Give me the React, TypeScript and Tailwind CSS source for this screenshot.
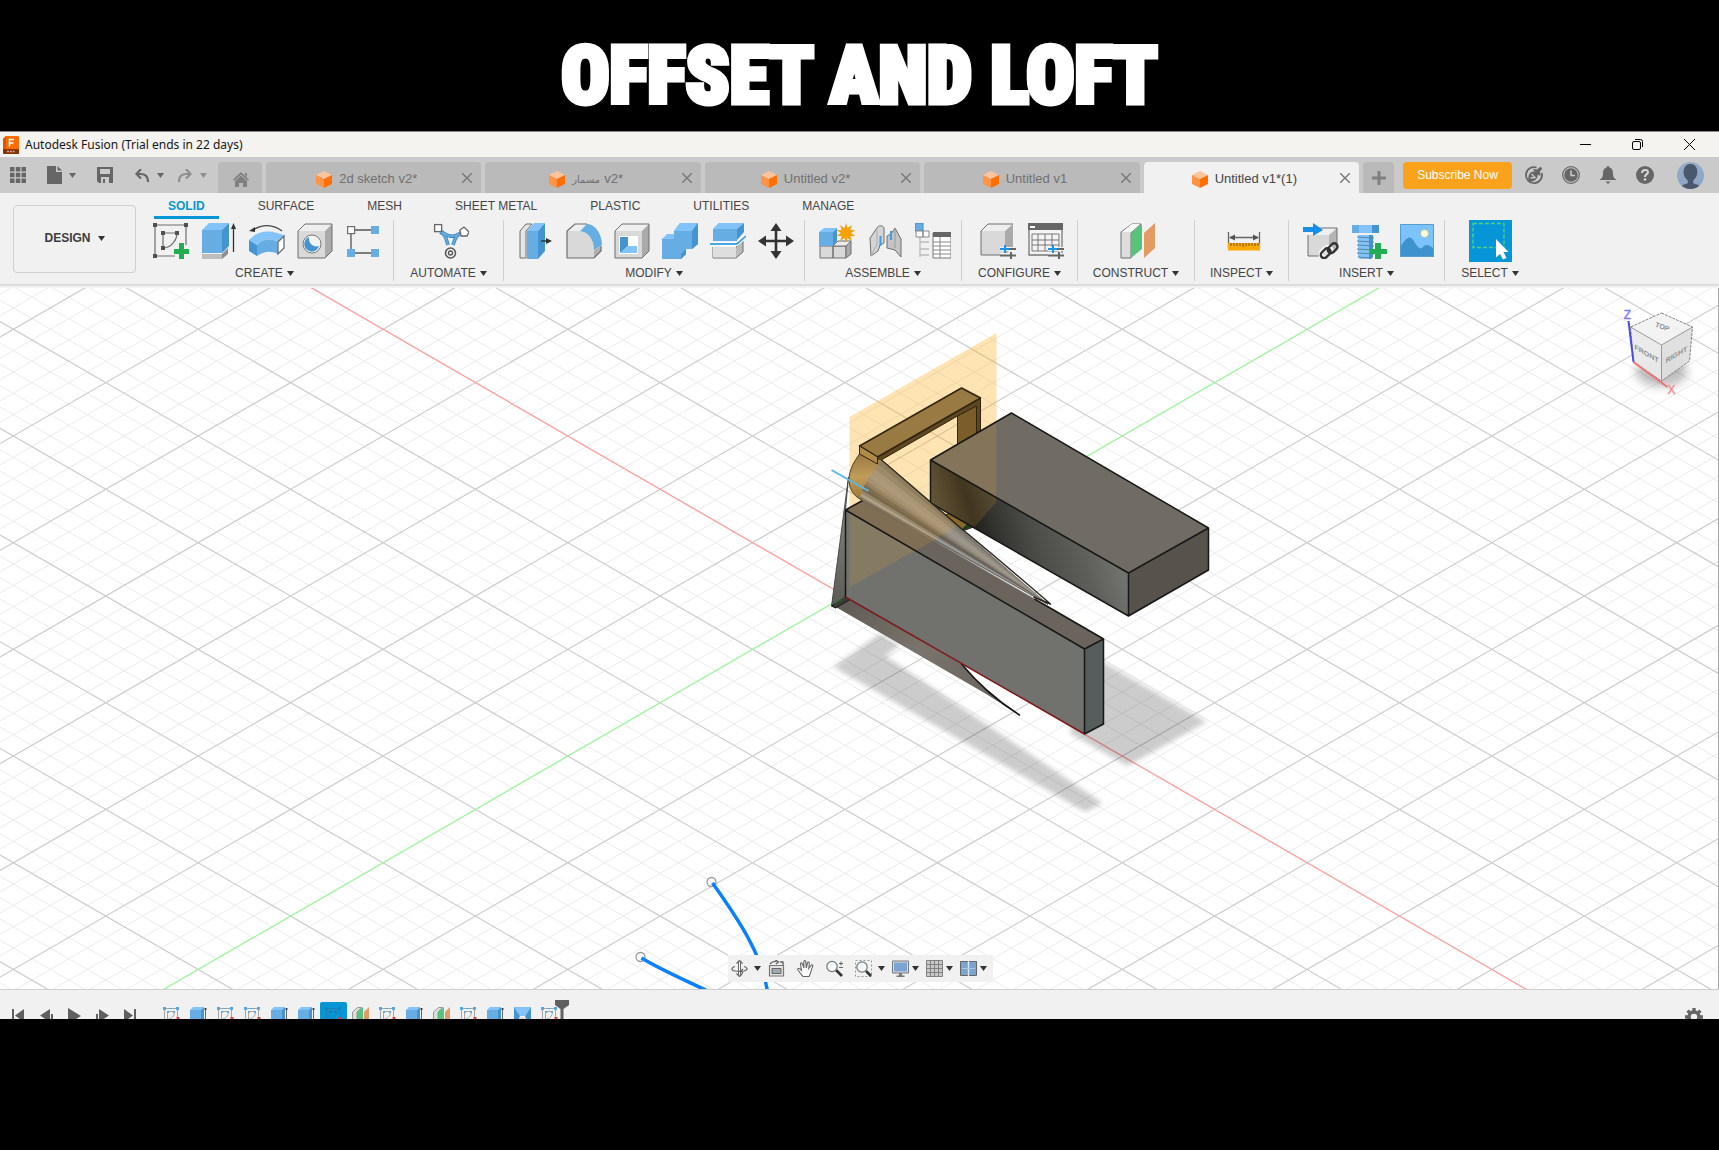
import React from "react";

type IconProps = { children: React.ReactNode; size?: string; box?: string };

function Svg({ children, size = "size-9", box = "0 0 36 36" }: IconProps) {
  return (
    <svg viewBox={box} className={`${size} shrink-0`} fill="none" aria-hidden="true">
      {children}
    </svg>
  );
}

function Caret({ className = "text-[#333]" }: { className?: string }) {
  return (
    <svg viewBox="0 0 7 5" className={`h-[5px] w-[7px] shrink-0 ${className}`} aria-hidden="true">
      <path d="M0 0h7L3.5 5z" fill="currentColor" />
    </svg>
  );
}

const LIGHT = "#82c4fa";
const MID = "#65ade3";
const DARK = "#4394d0";
const GREY = "#d9d9d9";
const EDGE = "#6e6e6e";

const SketchIcon = () => (
  <Svg>
    <g stroke={EDGE} strokeWidth="1.2">
      <path d="M2 2h31v20M2 2v31h20" />
      <path d="M10 10h14c0 7-6 15-14 15z" />
    </g>
    <g fill="#505050">
      <path d="M0 0h4v4H0zM31 0h4v4h-4zM0 31h4v4H0zM8 8h4v4H8zM22 8h4v4h-4zM8 23h4v4H8z" />
    </g>
    <path d="M26 20h5v6h6v5h-6v6h-5v-6h-5v-5h5z" fill="#22ae50" />
  </Svg>
);

const ExtrudeIcon = () => (
  <Svg>
    <path d="M1 31h20v5H1z" fill="#bdbdbd" />
    <path d="M21 31l6-6v6l-6 5z" fill="#8e8e8e" />
    <path d="M1 7h20v23H1z" fill={MID} />
    <path d="M1 7l7-7h20l-7 7z" fill={LIGHT} />
    <path d="M21 7l7-7v23l-7 7z" fill={DARK} />
    <path d="M32.500 29V4" stroke="#333" strokeWidth="1.300" />
    <path d="M32.500 0l2.500 6h-5z" fill="#333" />
  </Svg>
);

const RevolveIcon = () => (
  <Svg>
    <path d="M4 7C13 1 24 1 33 8" stroke="#444" strokeWidth="1.300" />
    <path d="M0 8l6-4v5z" fill="#333" />
    <path d="M0 17C9 7 22 6 36 13l-7 6c-8-4-15-3-21 3z" fill={LIGHT} />
    <path d="M8 22c6-6 13-7 21-3v12c-8-4-15-2-21 2z" fill={MID} />
    <path d="M0 17l8 5v11l-8-5z" fill={DARK} />
    <path d="M29 19l6-6v12l-6 6z" fill="#fff" stroke={EDGE} strokeWidth="1.300" />
  </Svg>
);

const GreyBox = () => (
  <>
    <path d="M1 8h27v27H1z" fill={GREY} />
    <path d="M1 8l7-7h27l-7 7z" fill="#efefef" />
    <path d="M28 8l7-7v27l-7 7z" fill="#aaa" />
    <path d="M1 8l7-7h27v27l-7 7H1z" stroke={EDGE} strokeWidth="1" />
  </>
);

const HoleIcon = () => (
  <Svg>
    <GreyBox />
    <circle cx="15" cy="21" r="9" fill="#f4f4f4" stroke="#777" />
    <path d="M12 14a7.500 7.500 0 1 0 10 9c-6 2-11-3-10-9z" fill={DARK} />
  </Svg>
);

const PatternIcon = () => (
  <Svg>
    <path d="M8 7h18M6 9v18M8 30h18" stroke="#555" strokeWidth="1.300" />
    <rect x="2.600" y="3.600" width="7" height="7" fill="#fff" stroke={EDGE} strokeWidth="1.200" />
    <path d="M26 3h8v8h-8zM2 26h8v8H2zM26 26h8v8h-8z" fill={MID} />
  </Svg>
);

const AutomateIcon = () => (
  <Svg>
    <path d="M7 9c6 2 6 7 8 13m14-13c-6 3-7 7-9 13M8 8c7 6 12 7 20 2" stroke="#3f86bd" strokeWidth="3.600" />
    <path d="M7 9c6 2 6 7 8 13m14-13c-6 3-7 7-9 13M8 8c7 6 12 7 20 2" stroke={MID} strokeWidth="1.800" />
    <rect x="1.600" y="1.600" width="7" height="7" fill="#fff" stroke="#666" strokeWidth="1.300" />
    <path d="M27 7l4-3 5 5-2 4-6 0z" fill="#fff" stroke="#666" strokeWidth="1.300" />
    <circle cx="17.500" cy="30" r="5" fill="#eee" stroke="#555" strokeWidth="1.500" />
    <circle cx="17.500" cy="30" r="2" stroke="#555" strokeWidth="1.300" />
  </Svg>
);

const PressPullIcon = () => (
  <Svg>
    <path d="M2 8l6-7h6l-6 7v27H2z" fill="#e5e5e5" stroke={EDGE} />
    <path d="M9 8h11v28H9z" fill={MID} />
    <path d="M9 8l7-8h11l-7 8z" fill={LIGHT} />
    <path d="M20 8l7-8v28l-7 8z" fill={DARK} />
    <path d="M23 18h8" stroke="#333" strokeWidth="1.500" />
    <path d="M34 18l-6-3v6z" fill="#333" />
  </Svg>
);

const FilletIcon = () => (
  <Svg>
    <path d="M1 8h13c8 1 14 8 14 19v8H1z" fill={GREY} />
    <path d="M1 8l8-7h12l-7 7z" fill="#efefef" />
    <path d="M28 27l7-4v5l-7 7z" fill="#b0b0b0" />
    <path d="M1 8l8-7h12M35 23v5l-7 7H1V8" stroke={EDGE} strokeWidth="1.200" />
    <path d="M14 8l7-7c8 0 15 10 15 21l-8 5C28 16 22 9 14 8z" fill={MID} />
  </Svg>
);

const ShellIcon = () => (
  <Svg>
    <GreyBox />
    <path d="M5 13h19v18H5z" fill="#fff" />
    <path d="M6 14h8v9l-8 7z" fill={DARK} />
    <path d="M14 23h9v7H6z" fill={LIGHT} />
  </Svg>
);

const CombineIcon = () => (
  <Svg>
    <path d="M0 16h12V8l6-8h18v21l-6 5h-6v5l-5 5H0z" fill={MID} />
    <path d="M0 16l5-5h7v5zM12 8l6-8h18l-6 8z" fill={LIGHT} />
    <path d="M30 8l6-8v21l-6 5zM19 31v5l5-5v-5z" fill={DARK} />
  </Svg>
);

const SplitIcon = () => (
  <Svg>
    <path d="M3 24h23v10H3z" fill={GREY} />
    <path d="M26 24l7-6v11l-7 6H3V24" fill="#bbb" stroke={EDGE} />
    <path d="M3 24h23v10.500H3z" fill="#dedede" />
    <path d="M3 6l6-6h25l-7 6v12H3z" fill={MID} />
    <path d="M3 6l6-6h25l-7 6z" fill={LIGHT} />
    <path d="M27 6l7-6v9l-7 8z" fill={DARK} />
    <path d="M0 21h27l9-8" stroke="#fff" strokeWidth="4" />
    <path d="M0 21h27l9-8" stroke="#49a5e8" strokeWidth="1.800" />
  </Svg>
);

const MoveIcon = () => (
  <Svg>
    <path d="M18 5v26M5 18h26" stroke="#333" strokeWidth="2.600" />
    <path d="M18 0l5.500 8h-11zM18 36l5.500-8h-11zM0 18l8-5.500v11zM36 18l-8-5.500v11z" fill="#333" />
  </Svg>
);

const NewComponentIcon = () => (
  <Svg>
    <path d="M1 23h13v12H1zM14 23h13v12H14z" fill={GREY} stroke={EDGE} />
    <path d="M14 23l5-5h13l-5 5z" fill="#eee" stroke={EDGE} />
    <path d="M27 23l5-5v13l-5 4z" fill="#aaa" stroke={EDGE} />
    <path d="M0 9h14v14H0z" fill={MID} />
    <path d="M0 9l5-4h13l-4 4z" fill={LIGHT} />
    <path d="M14 9l4-4v13l-4 5z" fill={DARK} />
    <path d="M27 0l1.500 5 4.500-3-1.700 5 5.200 0-4.400 3 4.400 3-5.200 0 1.700 5-4.500-3-1.500 5-1.500-5-4.500 3 1.700-5-5.200 0 4.400-3-4.400-3 5.200 0-1.700-5 4.500 3z" fill="#f6a10a" />
  </Svg>
);

const JointIcon = () => (
  <Svg>
    <path d="M3 15l7-10c1-3 6-3 7 0v15l-4 2-2 6-7 5z" fill="#d5d5d5" stroke={EDGE} />
    <path d="M10 7v14l-6 12" stroke="#aaa" />
    <path d="M20 13l4-2 4-6 6 11v18l-6-7-8-2z" fill="#c5c5c5" stroke={EDGE} />
    <path d="M28 5v20" stroke="#999" />
    <path d="M13.500 13v10M24 8v9" stroke="#3a9ee8" strokeWidth="2" />
  </Svg>
);

const TableIcon = () => (
  <Svg>
    <path d="M5 14v20M5 19h9M5 26h9M5 32h9" stroke="#bbb" strokeWidth="1.300" />
    <path d="M0 0h8v8H0z" fill={MID} stroke="#4a86b5" />
    <path d="M1 8h7v6H1zM8 8h6v6H8z" fill="#fff" stroke="#888" />
    <path d="M18 10h18v25H18z" fill="#fff" stroke="#777" />
    <path d="M18 9h18v5H18z" fill="#666" />
    <path d="M18 19h18M18 23h18M18 27h18M18 31h18M25 14v21" stroke="#888" />
  </Svg>
);

const Sliders = () => (
  <>
    <path d="M20 26h16M20 32h16" stroke="#f1f1f1" strokeWidth="4" />
    <path d="M20 26h16M20 32.500h16M31 29v7" stroke="#666" strokeWidth="2" />
    <path d="M20 26h9M25 22v8" stroke="#1c93ea" strokeWidth="2" />
  </>
);

const ConfigureIcon = () => (
  <Svg>
    <path d="M1 8h24v24H1z" fill={GREY} />
    <path d="M1 8l7-7h25l-8 7z" fill="#eee" />
    <path d="M25 8l8-7v23l-8 8z" fill="#aaa" />
    <path d="M1 32V8l7-7h25" stroke={EDGE} />
    <path d="M1 32h20" stroke={EDGE} />
    <Sliders />
  </Svg>
);

const ConfigTableIcon = () => (
  <Svg>
    <path d="M1 1h33v31H1z" fill="#f4f4f4" stroke="#777" strokeWidth="1.300" />
    <path d="M0 0h35v7H0z" fill="#666" />
    <path d="M2 3h5v2H2z" fill="#fff" />
    <path d="M4 11h27v17H4zM4 17h27M4 22h27M10 11v17M17 11v17M24 11v17" stroke="#777" />
    <Sliders />
  </Svg>
);

const ConstructIcon = () => (
  <Svg>
    <path d="M1 9l11-8h9l-10 9v25H1z" fill="#ddd" stroke={EDGE} />
    <path d="M2 9l10-8h8L11 9z" fill="#fafafa" />
    <path d="M11 10l11-9v25l-11 9z" fill="#57c27c" />
    <path d="M24 10l11-10v25L24 35z" fill="#e49a63" />
  </Svg>
);

const InspectIcon = () => (
  <Svg>
    <path d="M2.500 9v16M33.500 9v16M4 14.500h28" stroke="#666" strokeWidth="1.300" />
    <path d="M3 14.500l6-3v6zM33 14.500l-6-3v6z" fill="#555" />
    <path d="M2 20h32v7.500H2z" fill="#fba905" />
    <path d="M5 20v3M8 20v3M11 20v3M14 20v3M17 20v4M20 20v3M23 20v3M26 20v3M29 20v3M32 20v3" stroke="#79520a" />
  </Svg>
);

const InsertLinkIcon = () => (
  <Svg>
    <path d="M5 12h21v21H5z" fill={GREY} />
    <path d="M5 12l7-7h22l-8 7z" fill="#f0f0f0" />
    <path d="M26 12l8-7v22l-8 6z" fill="#b5b5b5" />
    <path d="M12 5h22v21M5 12v21h13" stroke={EDGE} />
    <path d="M0 4h10V0l10 7-10 6v-4H0z" fill="#178fe6" />
    <g stroke="#f1f1f1" strokeWidth="5">
      <rect x="17" y="26" width="12" height="7" rx="3.500" transform="rotate(-45 23 29.500)" />
    </g>
    <g stroke="#333" strokeWidth="2.400">
      <rect x="17" y="27" width="11" height="6.500" rx="3.200" transform="rotate(-45 22.500 30)" />
      <rect x="24" y="22" width="11" height="6.500" rx="3.200" transform="rotate(-45 29.500 25)" />
    </g>
  </Svg>
);

const BoltIcon = () => (
  <Svg>
    <path d="M7 12h15v22l-2 2H9l-2-2z" fill={LIGHT} />
    <path d="M18 12h4v22l-2 2h-2z" fill={DARK} />
    <path d="M6 14l17 1M6 18l17 1M6 22l17 1M6 26l17 1M6 30l17 1M7 34l13 1" stroke="#5b86a8" />
    <path d="M1 2h27v8H1z" fill={MID} />
    <path d="M8 2h13v8H8z" fill={LIGHT} />
    <path d="M21 2h7v8h-7z" fill={DARK} />
    <path d="M24 20h6v6h6v5h-6v6h-6v-6h-5v-5h5z" fill="#22ae50" />
  </Svg>
);

const ImageIcon = () => (
  <Svg>
    <path d="M1 1h34v33H1z" fill="#7cc3fb" />
    <path d="M1 24c5-7 9-13 13-7 3 4 6 10 9 8 3-3 5-5 12 1v8H1z" fill="#3e93cf" />
    <path d="M1.500 1.500h33v32h-33z" stroke="#569dd2" />
    <circle cx="25.500" cy="10.500" r="4" fill="#fffbd3" stroke="#8fb4a0" strokeWidth=".6" />
  </Svg>
);

const SelectIcon = () => (
  <svg viewBox="0 0 42 42" className="h-[42px] w-[43px]" fill="none" aria-hidden="true">
    <rect x="3.500" y="3.500" width="31" height="24" stroke="#50cf86" strokeWidth="1.400" strokeDasharray="4 2" />
    <path d="M26.500 19V37.500L30.500 34l3 5.500 3.500-1.500-3-6h5z" fill="#fff" />
  </svg>
);

type Group = { label: string; width: string; tools: [string, React.ReactNode][] };

const groups: Group[] = [
  {
    label: "CREATE",
    width: "w-[258px]",
    tools: [
      ["Create Sketch", <SketchIcon />],
      ["Extrude", <ExtrudeIcon />],
      ["Revolve", <RevolveIcon />],
      ["Hole", <HoleIcon />],
      ["Pattern", <PatternIcon />],
    ],
  },
  { label: "AUTOMATE", width: "w-[110px]", tools: [["Automated Modeling", <AutomateIcon />]] },
  {
    label: "MODIFY",
    width: "w-[301px]",
    tools: [
      ["Press Pull", <PressPullIcon />],
      ["Fillet", <FilletIcon />],
      ["Shell", <ShellIcon />],
      ["Combine", <CombineIcon />],
      ["Split Body", <SplitIcon />],
      ["Move", <MoveIcon />],
    ],
  },
  {
    label: "ASSEMBLE",
    width: "w-[157px]",
    tools: [
      ["New Component", <NewComponentIcon />],
      ["Joint", <JointIcon />],
      ["Bill of Materials", <TableIcon />],
    ],
  },
  {
    label: "CONFIGURE",
    width: "w-[116px]",
    tools: [
      ["Configure", <ConfigureIcon />],
      ["Configuration Table", <ConfigTableIcon />],
    ],
  },
  { label: "CONSTRUCT", width: "w-[117px]", tools: [["Offset Plane", <ConstructIcon />]] },
  { label: "INSPECT", width: "w-[94px]", tools: [["Measure", <InspectIcon />]] },
  {
    label: "INSERT",
    width: "w-[156px]",
    tools: [
      ["Insert Derive", <InsertLinkIcon />],
      ["Insert Fastener", <BoltIcon />],
      ["Canvas", <ImageIcon />],
    ],
  },
];

function TitleBar() {
  return (
    <div className="flex h-[26px] items-center border-t border-[#8a8684] bg-[#f4f3f0] pl-[3px] font-['Noto_Sans','Open_Sans',sans-serif]">
      <svg viewBox="0 0 16 18" className="h-[18px] w-4" aria-hidden="true">
        <path d="M3 0h12a1 1 0 0 1 1 1v16a1 1 0 0 1-1 1H1a1 1 0 0 1-1-1V3z" fill="#ff6b00" />
        <path d="M0 13h16v4a1 1 0 0 1-1 1H1a1 1 0 0 1-1-1z" fill="#8a3300" />
        <path d="M0 3l3-3v13H0z" fill="#d95b00" />
        <path d="M6.500 10.500V3.500h4.500M6.500 7h4" stroke="#fff" strokeWidth="1.600" fill="none" />
        <path d="M4 15.500h8" stroke="#d9a98c" strokeWidth="1.500" strokeDasharray="2 .8" />
      </svg>
      <span className="ml-[6px] flex-1 text-[12px] leading-4 text-[#161616]">Autodesk Fusion (Trial ends in 22 days)</span>
      <div className="flex items-center gap-[30px] pr-[19px] text-black">
        <button aria-label="Minimize" className="grid size-[22px] place-items-center">
          <svg viewBox="0 0 11 11" className="size-[11px]" aria-hidden="true"><path d="M0 5.500h11" stroke="currentColor" /></svg>
        </button>
        <button aria-label="Restore" className="grid size-[22px] place-items-center">
          <svg viewBox="0 0 11 11" className="size-[11px]" fill="none" stroke="currentColor" aria-hidden="true">
            <rect x=".5" y="2.500" width="8" height="8" rx="1.500" />
            <path d="M3 .5h5.500a2 2 0 0 1 2 2V8" />
          </svg>
        </button>
        <button aria-label="Close" className="grid size-[22px] place-items-center">
          <svg viewBox="0 0 11 11" className="size-[11px]" stroke="currentColor" aria-hidden="true"><path d="M0 0l11 11M11 0L0 11" /></svg>
        </button>
      </div>
    </div>
  );
}

function DocCube() {
  return (
    <svg viewBox="0 0 16 17" className="h-[17px] w-4 shrink-0" aria-hidden="true">
      <path d="M8 0l8 4-8 4-8-4z" fill="#ffc49b" />
      <path d="M0 4l8 4v9l-8-4z" fill="#ff9446" />
      <path d="M16 4L8 8v9l8-4z" fill="#ff6f06" />
    </svg>
  );
}

const docs: { arabic?: string; name: string }[] = [
  { name: "2d sketch v2*" },
  { arabic: "مسمار", name: "v2*" },
  { name: "Untitled v2*" },
  { name: "Untitled v1" },
  { name: "Untitled v1*(1)" },
];

function TabBar() {
  return (
    <div className="flex h-9 items-end bg-[#cacaca] text-[#666]">
      <div className="flex w-[218px] shrink-0 items-center self-stretch pl-[10px]">
        <button aria-label="Show Data Panel" className="mr-[21px]">
          <svg viewBox="0 0 16 16" className="size-4" fill="currentColor" aria-hidden="true">
            <path d="M0 0h4.500v4.500H0zM5.800 0h4.500v4.500H5.800zM11.500 0H16v4.500h-4.500zM0 5.800h4.500v4.500H0zM5.800 5.800h4.500v4.500H5.800zM11.500 5.800H16v4.500h-4.500zM0 11.500h4.500V16H0zM5.800 11.500h4.500V16H5.800zM11.500 11.500H16V16h-4.500z" />
          </svg>
        </button>
        <button aria-label="File" className="mr-[21px] flex items-center gap-[7px]">
          <svg viewBox="0 0 15 18" className="h-[18px] w-[15px]" fill="currentColor" aria-hidden="true">
            <path d="M0 0h9v6h6v12H0zM10.500 0L15 4.500h-4.500z" />
          </svg>
          <Caret className="text-[#666]" />
        </button>
        <button aria-label="Save" className="mr-[22px]">
          <svg viewBox="0 0 16 16" className="size-4" fill="currentColor" fillRule="evenodd" aria-hidden="true">
            <path d="M0 0h16v16H2l-2-2zM3 2v5h10V2zM4 10v6h2v-4h2v4h4v-6z" />
          </svg>
        </button>
        <button aria-label="Undo" className="mr-[14px] flex items-center gap-2">
          <svg viewBox="0 0 14 13" className="h-[13px] w-[14px]" fill="none" stroke="currentColor" strokeWidth="2.200" aria-hidden="true">
            <path d="M6 0L1.500 5 6 9.500M2 5h4c5 0 7 3 7 8" />
          </svg>
          <Caret className="text-[#666]" />
        </button>
        <button aria-label="Redo" className="flex items-center gap-2 text-[#8f8f8f]">
          <svg viewBox="0 0 14 13" className="h-[13px] w-[14px]" fill="none" stroke="currentColor" strokeWidth="2.200" aria-hidden="true">
            <path d="M8 0l4.500 5L8 9.500M12 5H8c-5 0-7 3-7 8" />
          </svg>
          <Caret className="text-[#8f8f8f]" />
        </button>
      </div>
      <div className="flex h-[31px] min-w-0 flex-1 gap-1 font-['Liberation_Sans','DejaVu_Sans',sans-serif] text-[13px]">
        <button aria-label="Home" className="grid w-11 shrink-0 place-items-center rounded-t-[4px] bg-[#bababa] pl-[2px] text-[#808080]">
          <svg viewBox="0 0 16 15" className="mt-1 h-[15px] w-4" fill="currentColor" aria-hidden="true">
            <path d="M8 0l8 7.500-1.200 1.200L8 2.400 1.200 8.700 0 7.500zM12 1h2v4l-2-2zM8 3.500l6 5.500v6h-4v-4H6v4H2V9z" />
          </svg>
        </button>
        {docs.map(({ arabic, name }, i) => {
          const active = i === docs.length - 1;
          return (
            <div
              key={i}
              className={`flex min-w-0 flex-1 items-center rounded-t-[4px] pl-2 pr-[6px] ${active ? "bg-[#f1f1f1] text-[#444]" : "bg-[#bababa] text-[#707070]"}`}
            >
              <button dir="ltr" className="flex min-w-0 flex-1 items-center justify-center gap-[7px] pt-[3px]">
                <DocCube />
                <span className="flex items-center gap-1 whitespace-nowrap">
                  {arabic && <span lang="ar" className="text-[10px]">{arabic}</span>}
                  {name}
                </span>
              </button>
              <button aria-label={`Close ${name}`} className="grid size-4 place-items-center">
                <svg viewBox="0 0 10 10" className="size-[10px]" stroke="#777" strokeWidth="1.400" aria-hidden="true"><path d="M0 0l10 10M10 0L0 10" /></svg>
              </button>
            </div>
          );
        })}
        <button aria-label="New Design" className="grid w-[31px] shrink-0 place-items-center rounded-t-[4px] bg-[#bababa] text-[#808080]">
          <svg viewBox="0 0 14 14" className="size-[14px]" stroke="currentColor" strokeWidth="3" aria-hidden="true"><path d="M7 0v14M0 7h14" /></svg>
        </button>
      </div>
      <div className="flex shrink-0 items-center self-stretch pl-[9px] pr-[15px]">
        <button className="mr-[13px] h-[27px] w-[109px] rounded-[4px] bg-[#faa21b] font-['Liberation_Sans',sans-serif] text-[12px] text-white">Subscribe Now</button>
        <div className="flex items-center gap-[19px]">
          <button aria-label="Extensions">
            <svg viewBox="0 0 18 18" className="size-[18px]" fill="none" aria-hidden="true">
              <path d="M11.500 1.500A8 8 0 1 0 16.700 7" stroke="currentColor" strokeWidth="1.800" />
              <path d="M3.500 15.500C2.500 9 5 5 9.500 5.500L8 3l4 .5L15.500.8l1.700 1.700L15 5.500l.5 4.500-2.800-1.500C13 13 9 16.500 3.500 15.500z" fill="currentColor" />
              <path d="M6.500 8l4 4M5.500 12l4.500-.5" stroke="#cacaca" strokeWidth="1.300" />
            </svg>
          </button>
          <button aria-label="Job Status">
            <svg viewBox="0 0 18 18" className="size-[18px]" fill="none" stroke="currentColor" aria-hidden="true">
              <circle cx="9" cy="9" r="8.300" strokeWidth="1.200" />
              <circle cx="9" cy="9" r="6.800" fill="currentColor" stroke="none" />
              <path d="M9 4.500V9.500h4" stroke="#cacaca" strokeWidth="1.600" />
            </svg>
          </button>
          <button aria-label="Notifications">
            <svg viewBox="0 0 18 18" className="size-[18px]" fill="currentColor" aria-hidden="true">
              <path d="M9 0a1.500 1.500 0 0 1 1.500 1.500C13.500 2.500 14 5 14 8c0 3 1 4 3 5.500V14H1v-.5C3 12 4 11 4 8c0-3 .5-5.500 3.500-6.500A1.500 1.500 0 0 1 9 0zM6.500 15.500h5L9 18z" />
            </svg>
          </button>
          <button aria-label="Help">
            <svg viewBox="0 0 18 18" className="size-[18px]" fill="none" aria-hidden="true">
              <circle cx="9" cy="9" r="9" fill="currentColor" />
              <path d="M6 7c0-4 6-4 6-.8 0 2-3 2-3 4.800" stroke="#d8d8d8" strokeWidth="2" />
              <circle cx="9" cy="13.500" r="1.300" fill="#d8d8d8" />
            </svg>
          </button>
        </div>
        <button aria-label="Account" className="ml-[23px]">
          <svg viewBox="0 0 27 27" className="size-[27px]" aria-hidden="true">
            <defs>
              <clipPath id="avatarClip"><circle cx="13.500" cy="13.500" r="13.500" /></clipPath>
              <linearGradient id="avatarBg" x1="0" y1="0" x2="0" y2="1"><stop offset="0" stopColor="#97acc9" /><stop offset="1" stopColor="#8ca3c4" /></linearGradient>
            </defs>
            <g clipPath="url(#avatarClip)">
              <path d="M0 0h27v27H0z" fill="url(#avatarBg)" />
              <path d="M3 27c1-4 3-4 8-6l-.5-3C4 13 6 2 13.500 2S23 13 16.500 18l-.5 3c5 2 7 2 8 6z" fill="#49586c" />
            </g>
          </svg>
        </button>
      </div>
    </div>
  );
}

const workspaces = ["SOLID", "SURFACE", "MESH", "SHEET METAL", "PLASTIC", "UTILITIES", "MANAGE"];

function Ribbon() {
  return (
    <div className="flex h-[95px] border-b-2 border-[#f1f1f1] bg-[#f1f1f1] font-['Liberation_Sans',sans-serif] text-[12px] text-[#444]">
      <div className="flex w-full border-b-2 border-[#dcdcdc]">
        <button className="ml-[13px] mt-3 flex h-[68px] w-[123px] shrink-0 items-center justify-center gap-[7px] rounded-[4px] border border-[#d0d0d0] pb-[2px] font-bold text-[#3c3c3c]">
          DESIGN
          <Caret />
        </button>
        <div className="flex min-w-0 flex-col">
          <nav className="ml-[18px] flex h-[26px] gap-[25px]">
            {workspaces.map((w) => (
              <button
                key={w}
                className={`whitespace-nowrap border-b-[3px] px-[14px] pt-[2px] ${w === "SOLID" ? "border-[#0696d7] font-bold text-[#0696d7]" : "border-transparent"}`}
              >
                {w}
              </button>
            ))}
          </nav>
          <div className="flex pt-[1px]">
            {groups.map((g) => (
              <section key={g.label} className={`flex h-[61px] shrink-0 flex-col items-center border-r border-[#cfcfcf] pt-[3px] ${g.width}`}>
                <div className="flex gap-3 pl-1">
                  {g.tools.map(([name, icon]) => (
                    <button key={name} aria-label={name} className="size-9">{icon}</button>
                  ))}
                </div>
                <button className="mt-[6px] flex items-center gap-1 leading-4">
                  {g.label}
                  <Caret />
                </button>
              </section>
            ))}
            <section className="flex w-[90px] shrink-0 flex-col items-center">
              <button aria-label="Select" className="h-[42px] w-[43px] bg-[#0696d7]"><SelectIcon /></button>
              <button className="mt-[3px] flex items-center gap-1 leading-4">
                SELECT
                <Caret />
              </button>
            </section>
          </div>
        </div>
      </div>
    </div>
  );
}

const OX = 845.5;
const OY = 596;
const SLOPE = 0.57735;
const STEP = 21.34;

function GridLines() {
  const minor: string[] = [];
  const major: string[] = [];
  for (let k = -45; k <= 45; k++) {
    if (k === 0) continue;
    const left = OX * SLOPE;
    const right = (1719 - OX) * SLOPE;
    const c = OY + k * STEP;
    const target = k % 5 === 0 ? major : minor;
    target.push(`M0 ${c - left}L1719 ${c + right}`, `M0 ${c + left}L1719 ${c - right}`);
  }
  return (
    <g fill="none">
      <path d={minor.join("")} stroke="#ebebeb" />
      <path d={major.join("")} stroke="#cdcdcd" strokeWidth="1.200" />
    </g>
  );
}

// Ruled strips of the loft surface, each running from the profile edge to the tip.
const loftProfile: [number, number][] = [
  [882, 460], [879, 465], [876, 470], [873, 474], [870, 478], [868, 482], [866, 485], [864, 488], [863, 491], [862, 494], [861, 497], [862, 500],
];
const loftShades = ["#7b7469", "#8a8478", "#999287", "#9c9589", "#958d80", "#847c6f", "#6b6458", "#605a51", "#82807b", "#a09f9b", "#6a6863"];

function Loft() {
  return (
    <g>
      {loftShades.map((shade, i) => {
        const [ax, ay] = loftProfile[i];
        const [bx, by] = loftProfile[i + 1];
        return <path key={i} d={`M${ax} ${ay}L${bx} ${by}L1048 604z`} fill={shade} stroke={shade} strokeWidth="0.700" />;
      })}
    </g>
  );
}

function Model() {
  return (
    <g strokeLinejoin="round">
      <g filter="url(#soft)" fill="#000" fillOpacity=".2">
        <path d="M880 634L834 667 1086 812 1103 803 886 656 900 645z" />
        <path d="M1100 660L1207 722 1128 766 1070 733z" />
      </g>
      <path d="M850 417L997 333V502L850 587z" fill="#fcaf25" fillOpacity=".35" />

      <path d="M944 516L963 531 974 527 957 510z" fill="#8b6827" stroke="#2b2516" />
      <path d="M961 531L974 527 968 523z" fill="#1f3c22" />
      <path d="M958 416L978 404V440L958 448z" fill="#7a5d28" stroke="#2f2410" />
      <path d="M878 457L981 398V435H977V406L958 416 880 461z" fill="#5f4820" stroke="#2f2410" />
      <path d="M860 446L962 388 981 398 878 457z" fill="#997a43" stroke="#2f2410" strokeWidth="1.500" />

      <path d="M931 460L1012 413 1209 528 1129 573z" fill="#706b63" />
      <path d="M931 460L1129 573V616L931 503z" fill="url(#boxSide)" />
      <path d="M1129 573L1209 528V570L1129 616z" fill="#57534c" />
      <path d="M931 460L997 422V502L975 527 931 503z" fill="#fcaf25" fillOpacity=".14" />
      <path d="M931 460L1012 413 1209 528V570L1129 616 931 503zL1129 573 1209 528M1129 573V616" fill="none" stroke="#171715" strokeWidth="1.500" />

      <path d="M849 477L832 606 846 597V510z" fill="url(#sliver)" stroke="#333" strokeWidth=".8" />
      <path d="M846 510L864 500 1104 639 1085 649z" fill="#6a645c" />
      <path d="M846 510L1085 649V734L846 597z" fill="#71726d" />
      <path d="M1085 649L1104 639V724L1085 734z" fill="#565d5d" />
      <path d="M850 507L862 501 933 541 850 587z" fill="#fcaf25" fillOpacity=".14" />
      <path d="M846 597V510L864 500M846 510L1085 649 1104 639V724L1085 734V649M1035 599L1104 639" fill="none" stroke="#171715" strokeWidth="1.500" />

      <path d="M860 454C852 465 848 475 850 485C852 492 855 496 862 500L880 480 882 460z" fill="url(#tan)" stroke="#55401a" />
      <Loft />
      <path d="M860 446L878 457V464L860 454z" fill="#b08a48" stroke="#2f2410" />
      <path d="M882 460L960 527Q1000 560 1051 604L1034 597" fill="none" stroke="#242320" strokeWidth="1.400" />
      <path d="M882 460L861 494 862 500 933 541 957 526z" fill="#fcaf25" fillOpacity=".16" />
      <path d="M832 470L869 491" stroke="#5bb8e4" strokeWidth="2" />

      <path d="M832 606L846 597 962 664Q990 697 1020 715L985 693 838 608z" fill="url(#under)" />
      <path d="M962 664Q990 697 1020 715Q985 692 962 664z" stroke="#161616" strokeWidth="1.500" />
      <path d="M832 606L846 597 850 600 836 608z" fill="#3a3a37" stroke="#1c1c1c" />
      <path d="M846 597L1085 734" stroke="#7d1c1c" strokeWidth="1.500" />
      <path d="M835 604L845 598" stroke="#1d7424" />
    </g>
  );
}

function ViewCube() {
  return (
    <g fontFamily="Liberation Sans, sans-serif" strokeLinejoin="round">
      <ellipse cx="1662" cy="372" rx="26" ry="15" fill="#000" fillOpacity=".25" filter="url(#cubeShadow)" />
      <path d="M1662 313L1693 327 1662 345 1631 327z" fill="#f2f2f2" fillOpacity=".93" />
      <path d="M1631 327L1662 345V381L1634 362z" fill="#e9e9e9" fillOpacity=".93" />
      <path d="M1662 345L1693 327 1690 361 1662 381z" fill="#dedede" fillOpacity=".93" />
      <path d="M1662 313L1693 327 1690 361 1662 381 1634 362 1631 327z" fill="none" stroke="#888" strokeDasharray="3 1" />
      <path d="M1631 327L1662 345 1693 327M1662 345V381" fill="none" stroke="#999" />
      <g fill="#8d8f91" fontSize="7" fontWeight="bold" textAnchor="middle">
        <text transform="translate(1662 329) rotate(20)">TOP</text>
        <text transform="translate(1647 356) skewY(30)">FRONT</text>
        <text transform="translate(1677 357) skewY(-30)">RIGHT</text>
      </g>
      <path d="M1629 321L1634 362" stroke="#4a4ae0" strokeWidth="2" />
      <path d="M1634 362L1668 387" stroke="#ee7474" strokeWidth="2" />
      <text x="1628" y="319" fontSize="12" fill="#7d7df5" stroke="#7d7df5" strokeWidth=".4" textAnchor="middle">Z</text>
      <text x="1672" y="394" fontSize="12" fill="#f58a8a" stroke="#f58a8a" strokeWidth=".4" textAnchor="middle">X</text>
    </g>
  );
}

function Scene() {
  return (
    <svg viewBox="0 288 1719 701" preserveAspectRatio="xMidYMin slice" className="h-[701px] w-full bg-white" role="img" aria-label="Design canvas">
      <defs>
        <filter id="soft" x="-10%" y="-10%" width="120%" height="120%"><feGaussianBlur stdDeviation="2.500" /></filter>
        <filter id="cubeShadow" x="-30%" y="-50%" width="160%" height="200%"><feGaussianBlur stdDeviation="5" /></filter>
        <linearGradient id="boxSide" gradientUnits="userSpaceOnUse" x1="940" y1="530" x2="1110" y2="480">
          <stop offset="0" stopColor="#4b483d" /><stop offset=".2" stopColor="#22211d" /><stop offset=".3" stopColor="#32322e" /><stop offset=".5" stopColor="#4c4d49" /><stop offset=".75" stopColor="#5f605b" /><stop offset=".92" stopColor="#70726e" />
        </linearGradient>
        <linearGradient id="sliver" x1="0" y1="0" x2="0" y2="1"><stop offset="0" stopColor="#8c8d88" /><stop offset="1" stopColor="#5c5b56" /></linearGradient>
        <linearGradient id="tan" x1="0" y1="0" x2="0" y2="1"><stop offset="0" stopColor="#9a7a45" /><stop offset=".5" stopColor="#c19b58" /><stop offset="1" stopColor="#9b7739" /></linearGradient>
        <linearGradient id="under" gradientUnits="userSpaceOnUse" x1="840" y1="600" x2="1000" y2="700"><stop offset="0" stopColor="#5f5a54" /><stop offset=".5" stopColor="#7a746c" /><stop offset="1" stopColor="#66625b" /></linearGradient>
      </defs>
      <GridLines />
      <path d="M0 107.800L1719 1100.300" stroke="#ff9c9c" strokeWidth="1.300" />
      <path d="M0 1084.200L1719 91.700" stroke="#9cf59c" strokeWidth="1.300" />
      <Model />
      <g fill="none">
        <circle cx="712" cy="882" r="4.500" stroke="#999" strokeWidth="1.300" />
        <circle cx="641" cy="957" r="4.500" stroke="#999" strokeWidth="1.300" />
        <path d="M713 883C738 918 763 955 768 992M642 958C660 969 683 979 708 991" stroke="#0a80fb" strokeWidth="3.500" />
      </g>
      <ViewCube />
    </svg>
  );
}

function NavBar() {
  return (
    <div className="absolute bottom-[7px] left-[728px] flex h-[27px] w-[265px] items-center bg-[#f1f1f1] pl-[3px]">
      <button aria-label="Orbit" className="mr-[7px] flex items-center gap-[6px]">
        <Svg size="size-[17px]" box="0 0 17 17">
          <path d="M8.500 2v13" stroke="#666" strokeWidth="3" /><path d="M8.500 2v13" stroke="#fff" />
          <path d="M5.500 3.500l3-3 3 3M5.500 13.500l3 3 3-3" stroke="#666" strokeWidth="1.200" />
          <path d="M13 6.500c4 1 4 3.500 0 4.500M4 6.500c-4 1-4 4 0 4.500 3 .6 6 .6 9 0M12 9l-2 2 2 2" stroke="#666" strokeWidth="1.200" />
        </Svg>
        <Caret />
      </button>
      <button aria-label="Look At" className="mr-3">
        <Svg size="size-[17px]" box="0 0 17 17">
          <path d="M1.500 5.500h14v10.500h-14z" fill="#e4e4e4" stroke="#777" strokeWidth="1.200" />
          <path d="M4 8.500h9v5H4z" fill="#9fa9b2" stroke="#666" />
          <path d="M2 4c2-2.500 4-3 6.500-2.500M7.500 0l3 2-2.500 2M12 2h3v3" stroke="#666" strokeWidth="1.400" />
        </Svg>
      </button>
      <button aria-label="Pan" className="mr-3">
        <Svg size="size-[17px]" box="0 0 17 17">
          <path d="M5 15.500L1 10c-1-1.500.8-2 2-1l1.500 1.500L3.500 4c0-1.500 1.500-1.500 2 0L7 8 6.800 2c0-1.800 1.900-1.800 2 0L9.300 8l1.200-5c.4-1.500 2-1.200 1.800.3L11.800 8.500 14 5.500c1-1.300 2.300-.4 1.600 1C14 10 14 13 12 16.500H6z" fill="#fff" stroke="#666" strokeWidth="1.100" />
        </Svg>
      </button>
      <button aria-label="Zoom" className="mr-3">
        <Svg size="size-[17px]" box="0 0 17 17">
          <path d="M10 10l6 6" stroke="#333" strokeWidth="2.600" />
          <circle cx="6" cy="6.500" r="5.200" fill="#f2fafa" stroke="#777" strokeWidth="1.200" />
          <path d="M13 3.500h4M15 1.500v4M13 7.500h4" stroke="#666" />
        </Svg>
      </button>
      <button aria-label="Fit" className="mr-[7px] flex items-center gap-[6px]">
        <Svg size="size-[17px]" box="0 0 17 17">
          <path d="M.5.5h16v16H.5z" stroke="#999" strokeDasharray="2 2" />
          <path d="M11 11l5 5" stroke="#333" strokeWidth="2.600" />
          <circle cx="7" cy="7" r="5.200" fill="#f2fafa" stroke="#777" strokeWidth="1.200" />
        </Svg>
        <Caret />
      </button>
      <button aria-label="Display Settings" className="mr-[7px] flex items-center gap-[3px]">
        <Svg size="size-[17px]" box="0 0 17 17">
          <path d="M.5 1h16v12H.5z" fill="#ddd" stroke="#777" />
          <path d="M2 2.500h13v9H2z" fill="#7ba4d3" />
          <path d="M7 13h3v2.500h2.500V17h-8v-1.500H7z" fill="#777" />
        </Svg>
        <Caret />
      </button>
      <button aria-label="Grid and Snaps" className="mr-[7px] flex items-center gap-[3px]">
        <Svg size="size-[17px]" box="0 0 17 17">
          <path d="M.5.5h16v16H.5z" fill="#c8c8c8" />
          <path d="M.5.500h16v16H.5zM4.500 0v17M8.500 0v17M12.500 0v17M0 4.500h17M0 8.500h17M0 12.500h17" stroke="#808080" />
        </Svg>
        <Caret />
      </button>
      <button aria-label="Viewports" className="flex items-center gap-[3px]">
        <Svg size="size-[17px]" box="0 0 17 17">
          <path d="M.5 1.500h16v14H.5z" fill="#7ba4cf" stroke="#666" />
          <path d="M8.500 1v15" stroke="#dfe8f2" strokeWidth="1.400" />
          <path d="M2 8.500h13" stroke="#a9c6e4" />
        </Svg>
        <Caret />
      </button>
    </div>
  );
}

type Feature = "sketch" | "extrude" | "selected" | "plane" | "loft";

const features: Feature[] = [
  "sketch", "extrude", "sketch", "sketch", "extrude", "extrude", "selected", "plane",
  "sketch", "extrude", "plane", "sketch", "extrude", "loft", "sketch",
];

function FeatureIcon({ kind }: { kind: Feature }) {
  if (kind === "extrude")
    return (
      <Svg size="size-[17px]" box="0 0 17 17">
        <path d="M0 3h11v14H0z" fill={MID} /><path d="M0 3l3-3h11l-3 3z" fill={LIGHT} /><path d="M11 3l3-3v14l-3 3z" fill={DARK} />
        <path d="M15.500 3v12" stroke="#666" /><path d="M14.500 1h2v2h-2z" fill="#444" />
      </Svg>
    );
  if (kind === "plane")
    return (
      <Svg size="size-[17px]" box="0 0 17 17">
        <path d="M.5 5l5-4.500h4L5 5v12H.5z" fill="#ddd" stroke="#999" />
        <path d="M5 5l6-5v12l-6 5z" fill="#57c27c" /><path d="M12 5l5-5v12l-5 5z" fill="#e49a63" />
      </Svg>
    );
  if (kind === "loft")
    return (
      <Svg size="size-[17px]" box="0 0 17 17">
        <path d="M0 0h17L11 9H6z" fill={LIGHT} /><path d="M0 0l6 9-3 8H0zM17 0l-6 9 3 8h3z" fill={DARK} />
        <path d="M3 17c0-9 11-9 11 0z" fill="#ddd" />
      </Svg>
    );
  const dim = kind === "selected";
  return (
    <Svg size="size-[17px]" box="0 0 17 17">
      <path d="M1.500 1.500h13M1.500 1.500v15M14.500 1.500v10M4.500 4.500h7c0 5-3 7-7 8z" stroke={dim ? "#2b7ba6" : "#a5a5a5"} />
      <path d="M0 0h3v3H0zM13 0h3v3h-3zM6 1h3v1H6z" fill={dim ? "#0b86c3" : "#55a8e2"} />
      <path d="M4 4h2v2H4zM10 4h2v2h-2z" fill={dim ? "#1a7bb0" : "#6aa9d4"} />
      <path d="M13.500 10h3v4h-3z" fill="#e04040" />
    </Svg>
  );
}

function Timeline() {
  const controls: [string, string][] = [
    ["Go to start", "M0 1h2v13H0zM12 1v13L3 7.500z"],
    ["Step back", "M10 1v13L0 7.500zM11 6h2v9h-2z"],
    ["Play", "M0 0l13 8-13 8z"],
    ["Step forward", "M3 1v13l10-6.500zM0 6h2v9H0z"],
    ["Go to end", "M0 1v13l9-6.500zM10 1h2v13h-2z"],
  ];
  return (
    <div className="relative flex h-[30px] items-start overflow-hidden border-t border-[#cfcfcf] bg-[#f1f1f1]">
      <div className="flex gap-[15px] pl-3 pt-[18px] text-[#606060]">
        {controls.map(([name, d]) => (
          <button key={name} aria-label={name} className="h-4 w-[13px]">
            <svg viewBox="0 0 13 16" className="h-4 w-[13px]" fill="currentColor" aria-hidden="true"><path d={d} /></svg>
          </button>
        ))}
      </div>
      <div className="flex pl-[21px] pt-3">
        {features.map((kind, i) => (
          <button key={i} aria-label={`Feature ${i + 1}`} className={`flex h-[27px] w-[27px] justify-center rounded-[2px] pt-[5px] ${kind === "selected" ? "bg-[#0696d7]" : ""}`}>
            <FeatureIcon kind={kind} />
          </button>
        ))}
      </div>
      <svg viewBox="0 0 14 20" className="absolute left-[555px] top-[10px] h-5 w-[14px]" aria-hidden="true">
        <path d="M0 0h14v5L8.500 9v11h-3V9L0 5z" fill="#606060" />
      </svg>
      <button aria-label="Timeline settings" className="ml-auto mr-4 mt-[18px] text-[#666]">
        <svg viewBox="0 0 18 18" className="size-[18px]" fill="none" stroke="currentColor" aria-hidden="true">
          <circle cx="9" cy="9" r="5" strokeWidth="3.600" />
          <path d="M9 0v3M9 15v3M0 9h3M15 9h3M2.600 2.600l2.200 2.200M13.200 13.200l2.200 2.200M15.400 2.600l-2.200 2.200M4.800 13.200l-2.200 2.200" strokeWidth="3.400" />
        </svg>
      </button>
    </div>
  );
}

export default function App() {
  return (
    <div className="flex min-h-screen flex-col bg-black">
      <header className="flex h-[131px] items-center justify-center">
        <h1 className="whitespace-nowrap pt-5 font-['Roboto_Condensed','Liberation_Sans_Narrow',sans-serif] text-[80px] font-black leading-none text-white [-webkit-text-stroke:5px_white]">
          OFFSET AND LOFT
        </h1>
      </header>
      <main>
        <TitleBar />
        <TabBar />
        <Ribbon />
        <div className="relative h-[701px] overflow-hidden border-r border-[#a8a8a8]">
          <Scene />
          <NavBar />
        </div>
        <Timeline />
      </main>
    </div>
  );
}
